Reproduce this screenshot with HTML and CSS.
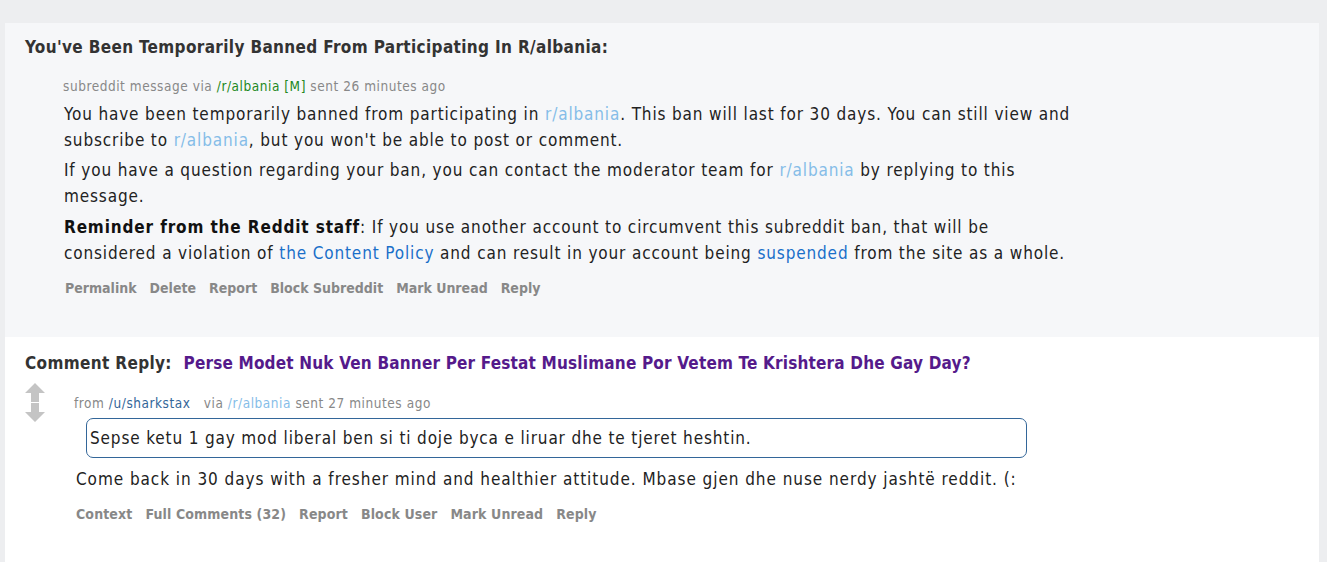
FILE: index.html
```html
<!DOCTYPE html>
<html>
<head>
<meta charset="utf-8">
<link rel="stylesheet" href="styles.css">
</head>
<body>
<div class="page">
  <div class="card">
    <section class="message modmail">
      <h2 class="subject">You've Been Temporarily Banned From Participating In R/albania:</h2>
      <div class="entry">
        <p class="tagline">subreddit message via <a class="green" href="#">/r/albania</a> <span class="green">[M]</span> sent 26 minutes ago</p>
        <div class="md">
          <p>You have been temporarily banned from participating in <a class="light" href="#">r/albania</a>. This ban will last for 30 days. You can still view and subscribe to <a class="light" href="#">r/albania</a>, but you won't be able to post or comment.</p>
          <p>If you have a question regarding your ban, you can contact the moderator team for <a class="light" href="#">r/albania</a> by replying to this message.</p>
          <p><strong>Reminder from the Reddit staff</strong>: If you use another account to circumvent this subreddit ban, that will be considered a violation of <a class="blue" href="#">the Content Policy</a> and can result in your account being <a class="blue" href="#">suspended</a> from the site as a whole.</p>
        </div>
        <ul class="buttons">
          <li>Permalink</li><li>Delete</li><li>Report</li><li>Block Subreddit</li><li>Mark Unread</li><li>Reply</li>
        </ul>
      </div>
    </section>
    <section class="message reply">
      <h2 class="subject">Comment Reply: <a class="title" href="#">Perse Modet Nuk Ven Banner Per Festat Muslimane Por Vetem Te Krishtera Dhe Gay Day?</a></h2>
      <div class="row">
        <div class="arrows">
          <svg width="20" height="19" viewBox="0 0 20 19"><path d="M10 0 L20 10 L14 10 L14 19 L6 19 L6 10 L0 10 Z" fill="#c4c4c4"/></svg>
          <svg width="20" height="19" viewBox="0 0 20 19"><path d="M10 19 L20 9 L14 9 L14 0 L6 0 L6 9 L0 9 Z" fill="#c4c4c4"/></svg>
        </div>
        <div class="entry2">
          <p class="tagline">from <a class="user" href="#">/u/sharkstax</a>&nbsp;&nbsp; via <a class="light" href="#">/r/albania</a> sent 27 minutes ago</p>
          <blockquote class="quote">Sepse ketu 1 gay mod liberal ben si ti doje byca e liruar dhe te tjeret heshtin.</blockquote>
          <p class="body2">Come back in 30 days with a fresher mind and healthier attitude. Mbase gjen dhe nuse nerdy jashtë reddit. (:</p>
          <ul class="buttons">
            <li>Context</li><li>Full Comments (32)</li><li>Report</li><li>Block User</li><li>Mark Unread</li><li>Reply</li>
          </ul>
        </div>
      </div>
    </section>
  </div>
</div>
</body>
</html>
```
FILE: styles.css
```css
* { box-sizing: border-box; }
html, body { margin: 0; padding: 0; }
body {
  background: #edeef0;
  font-family: "DejaVu Sans Condensed", "DejaVu Sans", sans-serif;
  color: #222;
  height: 562px;
  overflow: hidden;
}
a { text-decoration: none; }
.page { padding-top: 23px; }
.card {
  margin-left: 5px;
  width: 1314px;
  background: #fff;
}
.message { margin: 0; }
.modmail { background: #f6f7f9; padding: 14px 20px 0 20px; height: 314px; }
.reply { background: #fff; padding: 16px 20px 30px 20px; height: 240px; }
.subject {
  margin: 0;
  font-size: 17px;
  font-weight: bold;
  color: #333;
  line-height: 20px;
  letter-spacing: 0.35px;
}
.entry { padding-left: 38px; padding-top: 21px; }
.tagline {
  margin: 0;
  font-size: 13.5px;
  color: #888;
  line-height: 16px;
  letter-spacing: 0.55px;
}
.green { color: #228822; }
.md {
  margin-top: 8px;
  padding-left: 1px;
  font-size: 17px;
  letter-spacing: 0.86px;
  line-height: 25.6px;
  color: #222;
  width: 1013px;
}
.md p { margin: 0 0 5.3px 0; }
.md strong { color: #111; }
.light { color: #85bde8; }
.blue { color: #1a6fc9; }
.buttons {
  list-style: none;
  margin: 0;
  padding: 0 0 0 2px;
  display: flex;
  gap: 13px;
  font-size: 14px;
  font-weight: bold;
  color: #888;
  line-height: 16px;
}
.modmail .buttons { margin-top: 14px; }
.title { color: #551a8b; margin-left: 6px; letter-spacing: 0.18px; }
.row { display: flex; margin-top: 10px; }
.arrows { width: 20px; display: flex; flex-direction: column; gap: 1px; }
.entry2 { padding-left: 29px; padding-top: 12px; }
.user { color: #336699; }
.quote {
  margin: 7px 0 0 12px;
  width: 941px;
  height: 40px;
  border: 1px solid #336699;
  border-radius: 7px;
  padding: 9px 3px;
  font-size: 17px;
  letter-spacing: 0.85px;
  line-height: 20px;
  color: #222;
}
.body2 { margin: 11px 0 0 2px; font-size: 17px; letter-spacing: 0.94px; line-height: 20px; }
.reply .buttons { margin-top: 17px; padding-left: 2px; letter-spacing: 0.12px; }
```
